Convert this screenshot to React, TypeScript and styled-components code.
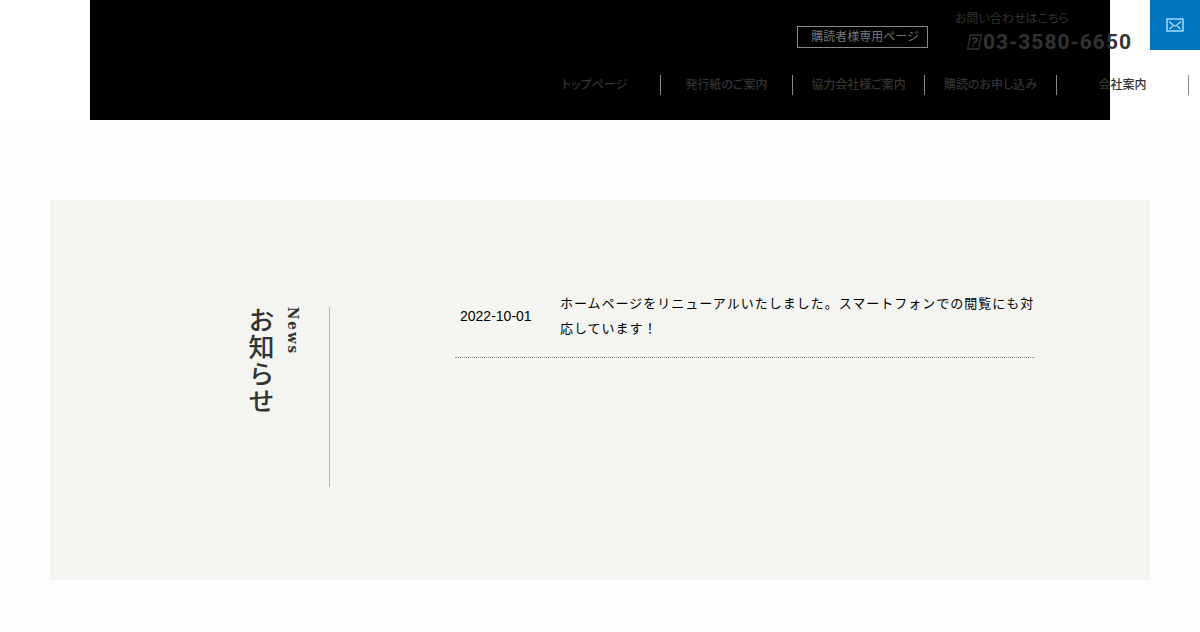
import React from "react";
import styled, { createGlobalStyle } from "styled-components";

const GlobalStyle = createGlobalStyle`
  * { box-sizing: border-box; }
  body {
    margin: 0;
    overflow-x: hidden;
    background: #fdfdfd;
    color: #000;
    font-family: "Liberation Sans", "Noto Sans CJK JP", sans-serif;
    font-size: 14px;
  }
  a { color: inherit; text-decoration: none; }
`;

const Header = styled.header`
  position: relative;
  padding: 0 90px;
  background: #fff;
`;

const HeaderInner = styled.div`
  display: flex;
  flex-direction: column;
  align-items: flex-end;
  height: 120px;
  background: #000;
  color: #333;
  font-size: 12px;
`;

const HeaderTop = styled.div`
  display: flex;
  align-items: flex-start;
  gap: 27px;
  margin-right: -22px;
  padding-top: 10px;
`;

const MemberLink = styled.a`
  margin-top: 16px;
  padding: 0 8px 0 13px;
  border: 1px solid #888;
  color: #777;
  line-height: 20px;
`;

const Contact = styled.div`
  width: 177px;
`;

const ContactLabel = styled.p`
  margin: 0;
  font-feature-settings: "palt";
  line-height: 18px;
`;

const Phone = styled.a`
  display: flex;
  align-items: center;
  justify-content: flex-end;
  font-family: Roboto, sans-serif;
  font-size: 21px;
  font-weight: 700;
  letter-spacing: 1px;
  line-height: 28px;
  white-space: nowrap;
`;

const Nav = styled.nav`
  margin: 19px -79px 0 0;
`;

const NavList = styled.ul`
  display: flex;
  margin: 0;
  padding: 0;
  list-style: none;
`;

const NavItem = styled.li`
  width: 132px;
  border-right: 1px solid #888;
  font-feature-settings: "palt";
  font-weight: 500;
  line-height: 20px;
  text-align: center;
  white-space: nowrap;
`;

const MailButton = styled.a`
  position: absolute;
  top: 0;
  right: 0;
  display: flex;
  align-items: center;
  justify-content: center;
  width: 50px;
  height: 50px;
  background: #0075c1;
  color: #b5e3fa;
`;

const News = styled.section`
  display: flex;
  gap: 125px;
  min-height: 380px;
  margin: 80px 50px 52px;
  padding: 91px 115px 92px;
  background: #f4f5f0;
`;

const NewsHeading = styled.div`
  flex: 0 0 165px;
  height: 180px;
  margin-top: 16px;
  padding-right: 24px;
  border-right: 1px solid #b5b5b2;
  color: #333;
  writing-mode: vertical-rl;
`;

const NewsLabel = styled.p`
  margin: 0;
  font-family: "DejaVu Serif Condensed", "DejaVu Serif", serif;
  font-size: 15px;
  font-weight: 700;
  letter-spacing: 2px;
  line-height: 24px;
`;

const NewsTitle = styled.h2`
  margin: 0 6px 0 0;
  font-size: 26px;
  font-weight: 500;
  letter-spacing: 1px;
  line-height: 32px;
`;

const NewsList = styled.dl`
  flex: 1;
  margin: 0;
`;

const NewsRow = styled.div`
  display: flex;
  align-items: center;
  gap: 24px;
  padding: 0 0 16px 5px;
  border-bottom: 1px dotted #888;
  line-height: 25px;
`;

const NewsDate = styled.dt`
  flex: 0 0 76px;
  white-space: nowrap;
`;

const NewsText = styled.dd`
  flex: 1;
  margin: 0;
  font-size: 13px;
  letter-spacing: 1px;
`;

const navItems = [
  "トップページ",
  "発行紙のご案内",
  "協力会社様ご案内",
  "購読のお申し込み",
  "会社案内",
];

const newsItems = [
  {
    date: "2022-10-01",
    text: "ホームページをリニューアルいたしました。スマートフォンでの閲覧にも対応しています！",
  },
];

function MailIcon() {
  return (
    <svg width="18" height="14" viewBox="0 0 18 14" fill="none" stroke="currentColor" aria-hidden="true">
      <rect x="1" y="1" width="16" height="12" strokeWidth="1.4" />
      <path d="M3 3.5 L7.4 7.3 Q9 8.6 10.6 7.3 L15 3.5 M3.5 11 L6.8 8 M14.5 11 L11.2 8" strokeWidth="1.2" />
    </svg>
  );
}

function PhoneMark() {
  return (
    <svg width="17" height="16" viewBox="0 0 17 16" fill="none" stroke="currentColor" aria-hidden="true">
      <path d="M4.5 1 H15.5 L12.5 15 H1.5 Z" strokeWidth="1.3" />
      <path d="M6.5 5.5 Q7.5 3.8 9.3 3.8 Q11.5 4 11 6 Q10.5 7.3 9 8 Q8 8.6 7.7 10 M7.4 11.2 L7.1 12.6" strokeWidth="1.8" />
    </svg>
  );
}

export default function App() {
  return (
    <>
      <GlobalStyle />
      <Header>
        <HeaderInner>
          <HeaderTop>
            <MemberLink href="#member">購読者様専用ページ</MemberLink>
            <Contact>
              <ContactLabel>お問い合わせはこちら</ContactLabel>
              <Phone href="tel:03-3580-6650">
                <PhoneMark />
                03-3580-6650
              </Phone>
            </Contact>
          </HeaderTop>
          <Nav>
            <NavList>
              {navItems.map((label) => (
                <NavItem key={label}>
                  <a href="#page">{label}</a>
                </NavItem>
              ))}
            </NavList>
          </Nav>
        </HeaderInner>
        <MailButton href="#contact" aria-label="お問い合わせ">
          <MailIcon />
        </MailButton>
      </Header>
      <main>
        <News>
          <NewsHeading>
            <NewsLabel>News</NewsLabel>
            <NewsTitle>お知らせ</NewsTitle>
          </NewsHeading>
          <NewsList>
            {newsItems.map((item) => (
              <NewsRow key={item.date}>
                <NewsDate>{item.date}</NewsDate>
                <NewsText>{item.text}</NewsText>
              </NewsRow>
            ))}
          </NewsList>
        </News>
      </main>
    </>
  );
}
